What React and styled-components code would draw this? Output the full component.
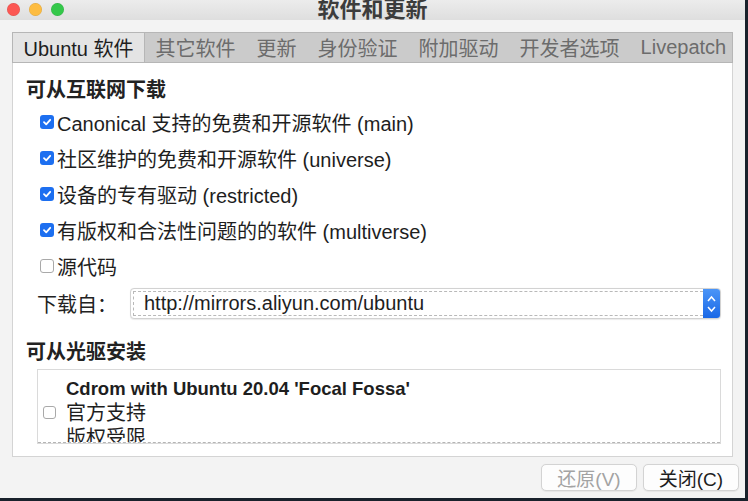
import React from "react";
import styled, { createGlobalStyle } from "styled-components";

const Global = createGlobalStyle`
  html, body { margin: 0; padding: 0; background: #19212b; }
  body { font-family: "Liberation Sans", "Noto Sans CJK SC", sans-serif; }
`;

const Window = styled.div`
  width: 745px;
  height: 498px;
  background: #f3f3f3;
  display: flex;
  flex-direction: column;
  overflow: hidden;
  color: #1e1e1e;
`;

const TitleBar = styled.div`
  height: 20px;
  flex: none;
  display: grid;
  grid-template-columns: 1fr auto 1fr;
  align-items: center;
  background: linear-gradient(#ececec, #dedede);
  overflow: hidden;
`;

const Lights = styled.div`
  display: flex;
  gap: 9px;
  padding-left: 7px;
  margin-top: -2px;
`;

const Light = styled.span`
  width: 13px;
  height: 13px;
  border-radius: 50%;
  background: ${(p) => p.$c};
  box-shadow: inset 0 0 0 0.5px rgba(0,0,0,0.12);
`;

const Title = styled.div`
  font-family: "Noto Sans CJK SC", sans-serif;
  font-weight: 700;
  font-size: 22px;
  line-height: 22px;
  color: #3c3c3c;
  margin-top: -6px;
`;

const Body = styled.div`
  flex: 1;
  display: flex;
  flex-direction: column;
  padding: 12px 12px 0 12px;
`;

const Tabs = styled.div`
  display: flex;
  height: 31px;
  box-sizing: border-box;
  border: 1px solid #b6b6b6;
  background: #cbcbcb;
`;

const Tab = styled.div`
  display: flex;
  align-items: center;
  padding: 0 10.5px;
  font-size: 20px;
  color: ${(p) => (p.$active ? "#1e1e1e" : "#6c6c6c")};
  background: ${(p) => (p.$active ? "#e4e4e4" : "transparent")};
  border-right: ${(p) => (p.$active ? "1px solid #b6b6b6" : "none")};
  white-space: nowrap;
`;

const Panel = styled.div`
  height: 394px;
  box-sizing: border-box;
  background: #fff;
  border: 1px solid #d4d4d4;
  border-top: none;
  padding: 13px 11px 0 13px;
  display: flex;
  flex-direction: column;
`;

const Heading = styled.div`
  font-family: "Noto Sans CJK SC", sans-serif;
  font-weight: 700;
  font-size: 20px;
  line-height: 26px;
  color: #222;
  margin-top: ${(p) => p.$mt || 0}px;
  margin-bottom: ${(p) => p.$mb || 0}px;
`;

const CheckRow = styled.label`
  display: flex;
  align-items: center;
  height: 36px;
  padding-left: 14px;
  font-size: 20px;
  color: #1e1e1e;
  white-space: nowrap;
`;

const Box = styled.span`
  width: 14px;
  height: 14px;
  box-sizing: border-box;
  flex: none;
  border-radius: 3px;
  margin-right: 3px;
  display: flex;
  align-items: center;
  justify-content: center;
  background: ${(p) => (p.$on ? "#1d6ff0" : "#fff")};
  border: ${(p) => (p.$on ? "none" : "1px solid #a9a9a9")};
`;

const Check = ({ on }) => (
  <Box $on={on}>
    {on && (
      <svg width="10" height="10" viewBox="0 0 10 10">
        <path d="M2 5.2 L4.2 7.3 L8.2 2.8" fill="none" stroke="#fff" strokeWidth="1.8" strokeLinecap="round" strokeLinejoin="round" />
      </svg>
    )}
  </Box>
);

const SourceRow = styled.div`
  display: flex;
  align-items: center;
  height: 31px;
  margin-top: 4px;
  padding-left: 11px;
`;

const SourceLabel = styled.span`
  width: 93px;
  flex: none;
  font-size: 20px;
  color: #222;
  white-space: nowrap;
`;

const Select = styled.div`
  flex: 1;
  height: 31px;
  box-sizing: border-box;
  display: flex;
  border: 1px solid #d2d2d2;
  border-radius: 4px;
  background: #fff;
  overflow: hidden;
  box-shadow: 0 0.5px 1px rgba(0,0,0,0.08);
`;

const SelectValue = styled.div`
  flex: 1;
  margin: 2px 0 2px 2px;
  border: 1px dashed #b9b9b9;
  border-right: none;
  display: flex;
  align-items: center;
  padding-left: 10px;
  font-size: 20px;
  color: #1e1e1e;
  white-space: nowrap;
`;

const Stepper = styled.div`
  width: 17px;
  flex: none;
  background: linear-gradient(#4b95f7, #1a68e6);
  display: flex;
  align-items: center;
  justify-content: center;
`;

const CdBox = styled.div`
  margin: 0 0 0 11px;
  border: 1px solid #dadada;
  height: 75px;
  box-sizing: border-box;
`;

const CdInner = styled.div`
  height: 72px;
  overflow: hidden;
  border-bottom: 1px dashed #b5b5b5;
  display: flex;
  align-items: flex-start;
  padding-left: 5px;
`;

const CdBody = styled.div`
  display: flex;
  flex-direction: column;
  margin-left: 10px;
  padding-top: 7px;
`;

const CdTitle = styled.div`
  font-weight: 700;
  font-size: 18.5px;
  line-height: 24px;
  color: #1e1e1e;
  white-space: nowrap;
`;

const CdLine = styled.div`
  font-size: 20px;
  line-height: 24.5px;
  color: #1e1e1e;
`;

const SmallBox = styled.span`
  width: 13px;
  height: 13px;
  box-sizing: border-box;
  border: 1px solid #a9a9a9;
  border-radius: 3px;
  background: #fff;
  flex: none;
  margin-top: 36px;
`;

const Buttons = styled.div`
  display: flex;
  justify-content: flex-end;
  gap: 6px;
  margin: 7px -6px 0 0;
`;

const Button = styled.button`
  width: 96px;
  height: 27px;
  border: 1px solid #d3d3d3;
  border-radius: 5px;
  background: #fdfdfd;
  font-family: "Liberation Sans", "Noto Sans CJK SC", sans-serif;
  font-size: 19px;
  color: ${(p) => (p.disabled ? "#a3a3a3" : "#1e1e1e")};
  padding: 0;
  display: flex;
  align-items: center;
  justify-content: center;
  box-shadow: 0 0.5px 1px rgba(0,0,0,0.06);
`;

const tabs = ["Ubuntu 软件", "其它软件", "更新", "身份验证", "附加驱动", "开发者选项", "Livepatch"];
const sources = [
  ["Canonical 支持的免费和开源软件 (main)", true],
  ["社区维护的免费和开源软件 (universe)", true],
  ["设备的专有驱动 (restricted)", true],
  ["有版权和合法性问题的的软件 (multiverse)", true],
  ["源代码", false],
];

export default function App() {
  return (
    <>
      <Global />
      <Window>
        <TitleBar>
          <Lights>
            <Light $c="#fc5753" />
            <Light $c="#fdbc40" />
            <Light $c="#34c84a" />
          </Lights>
          <Title>软件和更新</Title>
          <span />
        </TitleBar>
        <Body>
          <Tabs>
            {tabs.map((t, i) => (
              <Tab key={t} $active={i === 0}>{t}</Tab>
            ))}
          </Tabs>
          <Panel>
            <Heading $mb={2}>可从互联网下载</Heading>
            {sources.map(([t, on]) => (
              <CheckRow key={t}>
                <Check on={on} />
                {t}
              </CheckRow>
            ))}
            <SourceRow>
              <SourceLabel>下载自：</SourceLabel>
              <Select>
                <SelectValue>http://mirrors.aliyun.com/ubuntu</SelectValue>
                <Stepper>
                  <svg width="11" height="22" viewBox="0 0 11 22">
                    <path d="M2 8 L5.5 4 L9 8" fill="none" stroke="#fff" strokeWidth="1.5" />
                    <path d="M2 14 L5.5 18 L9 14" fill="none" stroke="#fff" strokeWidth="1.5" />
                  </svg>
                </Stepper>
              </Select>
            </SourceRow>
            <Heading $mt={19} $mb={5}>可从光驱安装</Heading>
            <CdBox>
              <CdInner>
                <SmallBox />
                <CdBody>
                  <CdTitle>Cdrom with Ubuntu 20.04 'Focal Fossa'</CdTitle>
                  <CdLine>官方支持</CdLine>
                  <CdLine>版权受限</CdLine>
                </CdBody>
              </CdInner>
            </CdBox>
          </Panel>
          <Buttons>
            <Button disabled>还原(V)</Button>
            <Button>关闭(C)</Button>
          </Buttons>
        </Body>
      </Window>
    </>
  );
}
